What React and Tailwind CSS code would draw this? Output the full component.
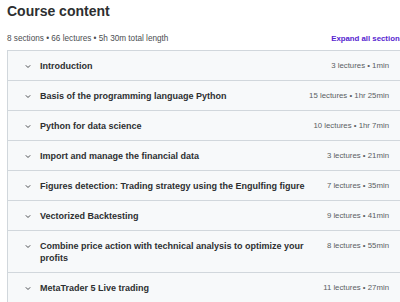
const SECTIONS = [
  { title: 'Introduction', lectures: 3, length: '1min' },
  { title: 'Basis of the programming language Python', lectures: 15, length: '1hr 25min' },
  { title: 'Python for data science', lectures: 10, length: '1hr 7min' },
  { title: 'Import and manage the financial data', lectures: 3, length: '21min' },
  { title: 'Figures detection: Trading strategy using the Engulfing figure', lectures: 7, length: '35min' },
  { title: 'Vectorized Backtesting', lectures: 9, length: '41min' },
  { title: 'Combine price action with technical analysis to optimize your profits', lectures: 8, length: '55min' },
  { title: 'MetaTrader 5 Live trading', lectures: 11, length: '27min' },
];

function Chevron() {
  return (
    <svg width="6" height="5" viewBox="0 0 6 5" className="shrink-0 text-[#4a4d50]">
      <path d="M0.8 1.3 L3 3.5 L5.2 1.3" fill="none" stroke="currentColor" strokeWidth="1" />
    </svg>
  );
}

function SectionRow({ section }) {
  return (
    <div className="flex items-start justify-between gap-[20px] border-b border-[#d1d7dc] bg-[#f7f9fa] pl-[17px] pr-[14px] pt-[9px] pb-[8px] last:border-b-0">
      <div className="flex min-w-0 flex-1 items-start gap-[9px]">
        <div className="flex h-[12px] items-center">
          <Chevron />
        </div>
        <span className="text-[9px] font-bold leading-[12px] text-[#2d2f31]">{section.title}</span>
      </div>
      <span className="shrink-0 text-[7.8px] leading-[12px] text-[#5a5e62]">
        {section.lectures} lectures • {section.length}
      </span>
    </div>
  );
}

export default function App() {
  return (
    <div className="h-[302px] w-[400px] overflow-hidden bg-white" style={{ fontFamily: '"Liberation Sans", Arial, sans-serif' }}>
      <div className="w-[404px] pl-[7px] pt-[2px]">
        <h2 className="text-[14px] font-bold leading-[18px] text-[#2d2f31]">Course content</h2>
        <div className="mt-[14px] flex items-center justify-between leading-[10px]">
          <span className="text-[8.2px] text-[#4a4d50]">8 sections • 66 lectures • 5h 30m total length</span>
          <span className="whitespace-nowrap pl-[6px] text-[7.8px] font-bold text-[#5624d0]">Expand all sections</span>
        </div>
        <div className="mt-[6px] border border-[#d1d7dc]">
          {SECTIONS.map((s) => (
            <SectionRow key={s.title} section={s} />
          ))}
        </div>
      </div>
    </div>
  );
}
